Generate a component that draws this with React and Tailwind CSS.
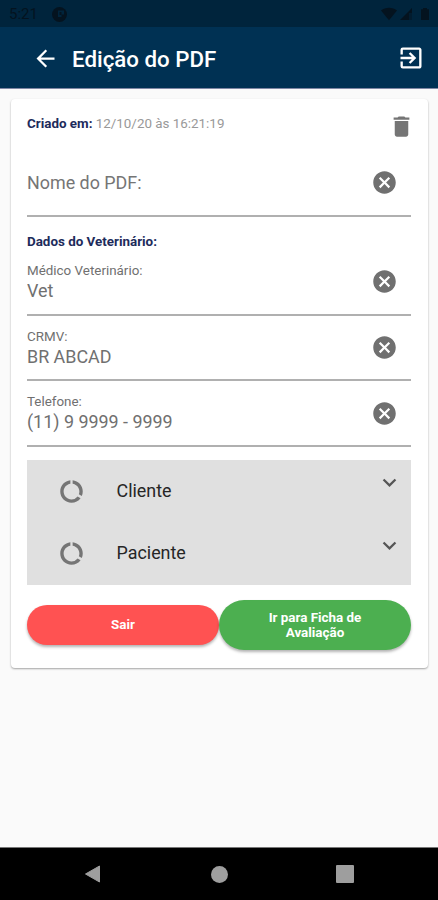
import React, { useState } from 'react';
import { MdArrowBack, MdCancel, MdDataUsage, MdDelete, MdExitToApp, MdExpandMore } from 'react-icons/md';

const StatusBar = () => (
  <div className="flex h-[27px] items-center justify-between bg-[#00243c] pl-[9px] pr-[8px] text-[#04131f]">
    <div className="flex items-center">
      <span className="w-[43px] pt-[2px] text-[15px] leading-[25px] text-[#04131f]">5:21</span>
      <svg className="mt-px h-[15px] w-[15px]" viewBox="0 0 15 15">
        <circle cx="7.5" cy="7.5" r="7.5" fill="currentColor" />
        <path d="M6 3.5h6v4H9.500v2.500H6z" fill="#00243c" />
        <path d="M7.500 5h2v3h-2z" fill="currentColor" />
      </svg>
    </div>
    <svg className="mt-px h-[14px] w-[49px]" viewBox="0 0 49 14" fill="currentColor">
      <path d="M0 3.5C4.5-.2 11.500-.2 16 3.500L8 13.200z" />
      <path d="M19 13L31 1v5h-3v7z" />
      <path d="M31 1v12h-3V6z" opacity=".45" />
      <path d="M40 2.200h2V1h4v1.200h2V13h-8z" />
    </svg>
  </div>
);

const Header = () => (
  <header className="flex h-[62px] items-center border-b border-[#7f87a4] bg-[#003153] pl-[32px] pr-[13px] pt-px text-white">
    <button>
      <MdArrowBack size={27} />
    </button>
    <h1 className="ml-[13px] flex-1 pt-px text-[22.3px] font-medium leading-[28px]">Edição do PDF</h1>
    <button>
      <MdExitToApp size={28} />
    </button>
  </header>
);

const Field = ({ label, value, onChange }) => (
  <div className="flex h-[65.7px] items-center border-b-2 border-[#b0b0b0] pr-[13px] text-[#707070]">
    <label className="block min-w-0 flex-1">
      <span className="block text-[13.4px] leading-[18px]">{label}</span>
      <input
        value={value}
        onChange={(e) => onChange(e.target.value)}
        className="block h-[22px] w-full text-[17.9px] leading-[22px] outline-none"
      />
    </label>
    <button onClick={() => onChange('')}>
      <MdCancel size={27} />
    </button>
  </div>
);

const ExpandableRow = ({ title }) => (
  <div className="flex h-[62.500px] items-center pl-[31px] pr-[8.5px]">
    <MdDataUsage size={27} className="text-[#757575]" />
    <span className="ml-[31.5px] flex-1 text-[17.9px] text-[#262626]">{title}</span>
    <MdExpandMore size={27} className="mb-[17px] text-[#555555]" />
  </div>
);

const App = () => {
  const [pdfName, setPdfName] = useState('');
  const [vet, setVet] = useState({
    name: 'Vet',
    crmv: 'BR ABCAD',
    phone: '(11) 9 9999 - 9999'
  });

  return (
    <div className="flex h-[900px] w-[438px] flex-col overflow-hidden bg-[#fafafa] font-['Roboto',sans-serif]">
      <StatusBar />
      <Header />

      <main className="flex-1 px-[10.5px] pt-[10px]">
        <div className="h-[569px] rounded-[4px] bg-white px-[16.5px] shadow-[0_1px_2px_rgba(0,0,0,0.35)]">
          <div className="flex h-[51px] items-center justify-between">
            <p className="text-[13.4px] text-[#999999]">
              <span className="font-bold text-[#1d2b5b]">Criado em:</span> 12/10/20 às 16:21:19
            </p>
            <button className="-mr-[4px] mt-[4px] text-[#757575]">
              <MdDelete size={27} />
            </button>
          </div>

          <div className="flex h-[67px] items-center border-b-2 border-[#b0b0b0] pr-[13px] text-[#757575]">
            <input
              value={pdfName}
              onChange={(e) => setPdfName(e.target.value)}
              placeholder="Nome do PDF:"
              className="h-[28px] min-w-0 flex-1 text-[17.9px] outline-none placeholder:text-[#757575]"
            />
            <button onClick={() => setPdfName('')} className="text-[#707070]">
              <MdCancel size={27} />
            </button>
          </div>

          <h2 className="h-[33px] pt-[16px] text-[13.4px] font-bold leading-[18px] text-[#1d2b5b]">Dados do Veterinário:</h2>
          <Field label="Médico Veterinário:" value={vet.name} onChange={(name) => setVet({ ...vet, name })} />
          <Field label="CRMV:" value={vet.crmv} onChange={(crmv) => setVet({ ...vet, crmv })} />
          <Field label="Telefone:" value={vet.phone} onChange={(phone) => setVet({ ...vet, phone })} />

          <div className="mt-[12.9px] bg-[#e0e0e0]">
            <ExpandableRow title="Cliente" />
            <ExpandableRow title="Paciente" />
          </div>

          <div className="mt-[15px] flex items-center text-[13.400px] font-bold leading-[15px] text-white">
            <button className="h-[40px] w-1/2 rounded-full bg-[#ff5252] shadow-[0_2px_3px_rgba(0,0,0,0.3)]">Sair</button>
            <button className="h-[50px] w-1/2 rounded-full bg-[#4caf50] px-[40px] shadow-[0_2px_3px_rgba(0,0,0,0.3)]">
              Ir para Ficha de Avaliação
            </button>
          </div>
        </div>
      </main>

      <nav className="flex h-[53px] items-center border-t border-[#777777] bg-black text-[#9e9e9e]">
        <svg className="ml-[84px] h-[18px] w-[17px]" viewBox="0 0 17 18">
          <path d="M15.500 1v16L1.500 9z" fill="currentColor" stroke="currentColor" strokeLinejoin="round" />
        </svg>
        <div className="ml-[110px] h-[17px] w-[17px] rounded-full bg-current" />
        <div className="ml-[108px] h-[18px] w-[18px] rounded-[1px] bg-current" />
      </nav>
    </div>
  );
};

export default App;
